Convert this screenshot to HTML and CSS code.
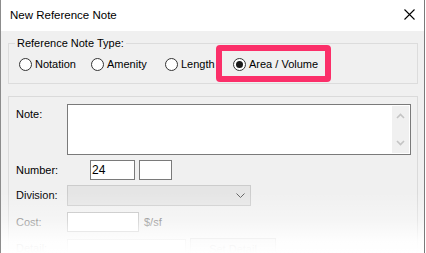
FILE: index.html
```html
<!DOCTYPE html>
<html>
<head>
<meta charset="utf-8">
<link rel="stylesheet" href="styles.css">
</head>
<body>
<div class="window">
  <div class="titlebar">
    <span class="title">New Reference Note</span>
    <svg class="close" width="11" height="11" viewBox="0 0 11 11"><path d="M0.5 0.5L10.5 10.5M10.5 0.5L0.5 10.5" stroke="#000" stroke-width="1.1" fill="none"/></svg>
  </div>
  <div class="content">
    <fieldset class="group">
      <legend>Reference Note Type:</legend>
      <div class="radios">
        <label class="radio"><span class="circle"></span>Notation</label>
        <label class="radio"><span class="circle"></span>Amenity</label>
        <label class="radio"><span class="circle"></span>Length</label>
        <label class="radio highlighted"><span class="circle checked"></span>Area / Volume</label>
      </div>
    </fieldset>
    <div class="panel">
      <div class="row row-note">
        <span class="lbl lbl-top">Note:</span>
        <div class="textarea">
          <div class="scroll">
            <svg width="9" height="6" viewBox="0 0 9 6"><path d="M1 5L4.5 1.5L8 5" stroke="#c4c4c4" stroke-width="1.6" fill="none"/></svg>
            <svg width="9" height="6" viewBox="0 0 9 6"><path d="M1 1L4.5 4.5L8 1" stroke="#c4c4c4" stroke-width="1.6" fill="none"/></svg>
          </div>
        </div>
      </div>
      <div class="row">
        <span class="lbl">Number:</span>
        <span class="lbl-pad"></span>
        <div class="input num">24</div>
        <div class="input num2"></div>
      </div>
      <div class="row">
        <span class="lbl">Division:</span>
        <div class="select">
          <svg width="9" height="5" viewBox="0 0 9 5"><path d="M0.5 0.5L4.5 4.5L8.5 0.5" stroke="#606060" stroke-width="1" fill="none"/></svg>
        </div>
      </div>
      <div class="row row-gap">
        <span class="lbl disabled">Cost:</span>
        <div class="input cost"></div>
        <span class="unit">$/sf</span>
      </div>
      <div class="row row-gap">
        <span class="lbl disabled">Detail:</span>
        <div class="input detail"></div>
        <div class="button">Set Detail</div>
      </div>
    </div>
  </div>
  <div class="fade"></div>
</div>
</body>
</html>
```

FILE: styles.css
```css
*, *::before, *::after { box-sizing: border-box; }
html, body { margin: 0; padding: 0; background: #fff; }
body {
  font-family: "Liberation Sans", Arial, sans-serif;
  font-size: 11px;
  color: #000;
  width: 426px;
  height: 253px;
  overflow: hidden;
}
.window {
  position: relative;
  width: 425px;
  height: 253px;
  border-left: 1px solid #8c8c8c;
  border-right: 1px solid #7a7a7a;
  background: #f0f0f0;
  overflow: hidden;
}
.titlebar {
  height: 31px;
  background: #fff;
  display: flex;
  align-items: center;
  justify-content: space-between;
  padding: 0 9px 1px 9px;
}
.title { font-size: 11.5px; line-height: 14px; }
.close { display: block; margin-top: -1px; }
.content {
  padding: 6px 6px 0 7px;
}
.group {
  margin: 0;
  padding: 8px 0 12px 10px;
  border: 1px solid #dcdcdc;
  min-width: 0;
  width: 410px;
}
.group legend {
  padding: 0 2px;
  margin-left: -4px;
  line-height: 13px;
}
.radios {
  display: grid;
  grid-template-columns: 72px 74px 68px auto;
  line-height: 13px;
}
.radio {
  display: flex;
  align-items: center;
  gap: 3px;
  white-space: nowrap;
}
.circle {
  width: 13px;
  height: 13px;
  border: 1px solid #333;
  border-radius: 50%;
  background: #fff;
  display: flex;
  align-items: center;
  justify-content: center;
  flex: none;
}
.circle.checked::after {
  content: "";
  width: 7px;
  height: 7px;
  border-radius: 50%;
  background: #1a1a1a;
}
.highlighted { position: relative; }
.highlighted::before {
  content: "";
  position: absolute;
  left: -17px;
  top: -13px;
  width: 115px;
  height: 37px;
  border: 6px solid #fb2f69;
  border-radius: 4px;
}
.panel {
  margin-top: 12px;
  width: 410px;
  height: 170px;
  border: 1px solid #dadada;
  padding: 7px 6px 0 7px;
  display: flex;
  flex-direction: column;
  gap: 5px;
}
.row {
  display: flex;
  align-items: center;
}
.row-gap { margin-top: 1px; }
.row-note { align-items: flex-start; }
.lbl { width: 51px; flex: none; line-height: 13px; }
.lbl-top { padding-top: 4px; }
.lbl-pad { width: 23px; flex: none; }
.disabled { color: #6d6d6d; }
.textarea {
  flex: 1;
  height: 51px;
  border: 1px solid #7a7a7a;
  background: #fff;
  display: flex;
  justify-content: flex-end;
  padding: 1px;
}
.scroll {
  width: 17px;
  background: #f0f0f0;
  display: flex;
  flex-direction: column;
  align-items: center;
  justify-content: space-between;
  padding: 7px 0 7px;
}
.scroll svg { display: block; }
.input {
  height: 20px;
  border: 1px solid #7a7a7a;
  background: #fff;
  padding: 2px 1px;
  line-height: 14px;
  font-size: 12px;
}
.num { width: 45px; }
.num2 { width: 33px; margin-left: 4px; }
.select {
  width: 184px;
  height: 21px;
  background: #e5e5e5;
  border: 1px solid #cccccc;
  display: flex;
  align-items: center;
  justify-content: flex-end;
  padding-right: 5px;
}
.select svg { display: block; }
.cost { width: 72px; border-color: #bfbfbf; }
.unit { margin-left: 5px; color: #6d6d6d; }
.detail { width: 119px; border-color: #bfbfbf; }
.button {
  width: 86px;
  height: 21px;
  margin-left: 4px;
  border: 1px solid #adadad;
  background: #e1e1e1;
  color: #6d6d6d;
  display: flex;
  align-items: center;
  justify-content: center;
}
.fade {
  position: absolute;
  left: 0;
  right: 0;
  top: 192px;
  bottom: 0;
  background: linear-gradient(to bottom, rgba(255,255,255,0) 0%, rgba(255,255,255,0.35) 45%, rgba(255,255,255,0.9) 80%, #fff 100%);
}
```
